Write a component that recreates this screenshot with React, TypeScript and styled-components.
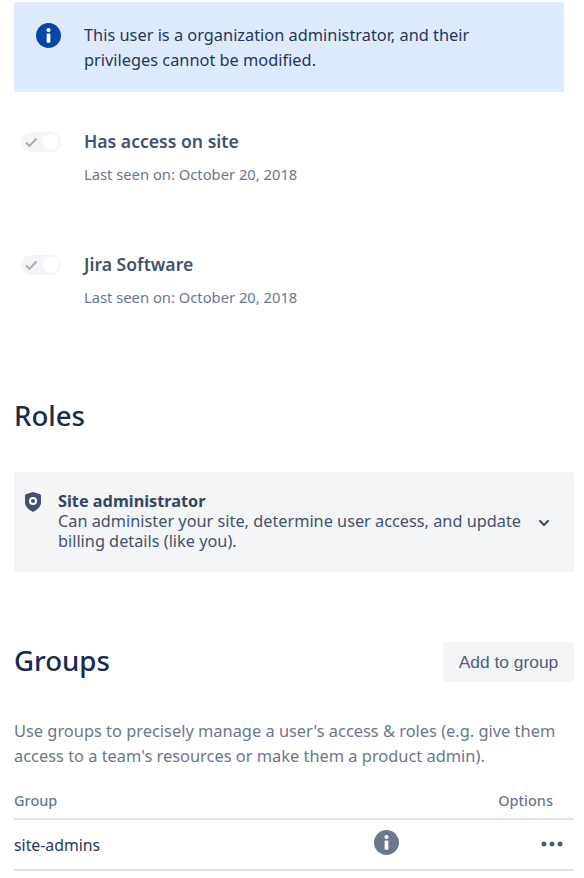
import React from 'react';
import styled, { createGlobalStyle } from 'styled-components';

const GlobalStyle = createGlobalStyle`
  html, body {
    margin: 0;
    padding: 0;
    background: #fff;
  }
  body {
    font-family: "Noto Sans", "Open Sans", sans-serif;
    color: #172b4d;
  }
`;

const Page = styled.div`
  width: 560px;
  height: 878px;
  overflow: hidden;
  padding: 2px 10px 0 14px;
`;

const Alert = styled.div`
  display: flex;
  align-items: flex-start;
  gap: 23px;
  height: 90px;
  box-sizing: border-box;
  width: 550px;
  padding: 21px 20px 0 22px;
  background: #deebff;
  border-radius: 3px;
`;

const AlertText = styled.div`
  font-size: 16.35px;
  line-height: 25px;
  color: #253858;
`;

const AccessList = styled.div`
  display: flex;
  flex-direction: column;
  gap: 68px;
  margin-top: 37px;
`;

const AccessRow = styled.div`
  display: flex;
  gap: 23px;
  padding-left: 7px;
`;

const Toggle = styled.div`
  width: 40px;
  height: 20px;
  margin-top: 3px;
  display: flex;
  align-items: center;
  justify-content: space-between;
  box-sizing: border-box;
  padding: 0 2px 0 3px;
  border-radius: 10px;
  background: #f4f5f7;
  color: #a5adba;
`;

const Knob = styled.span`
  width: 16px;
  height: 16px;
  border-radius: 50%;
  background: #fff;
`;

const AccessName = styled.div`
  font-size: 17.6px;
  line-height: 25px;
  font-weight: 600;
  color: #42526e;
`;

const Seen = styled.div`
  margin-top: 10px;
  font-size: 14.75px;
  line-height: 20px;
  color: #6b778c;
`;

const SectionTitle = styled.h2`
  margin: 0;
  font-size: 27.6px;
  line-height: 36px;
  font-weight: 500;
  color: #172b4d;
`;

const RolesTitle = styled(SectionTitle)`
  margin-top: 90px;
`;

const GroupsTitle = styled(SectionTitle)`
  margin-bottom: 4px;
`;

const RoleCard = styled.div`
  display: flex;
  align-items: flex-start;
  width: 560px;
  height: 100px;
  box-sizing: border-box;
  margin-top: 39px;
  padding: 19px 0 0 10px;
  background: #f4f5f7;
  border-radius: 3px;
`;

const RoleBody = styled.div`
  flex: 1;
  margin-left: 16px;
  font-size: 16.3px;
  line-height: 20px;
  color: #42526e;
`;

const RoleName = styled.div`
  font-weight: 700;
  color: #344563;
`;

const Chevron = styled.div`
  width: 18px;
  margin: 23px 21px 0 0;
  color: #42526e;
`;

const GroupsHeader = styled.div`
  display: flex;
  align-items: center;
  justify-content: space-between;
  margin-top: 70px;
`;

const AddButton = styled.button`
  width: 131px;
  height: 40px;
  border: 0;
  border-radius: 3px;
  background: #f4f5f7;
  color: #505f79;
  font-family: "Liberation Sans", Arial, sans-serif;
  font-size: 17.4px;
`;

const Description = styled.p`
  margin: 36px 0 0;
  font-size: 16.4px;
  line-height: 25px;
  color: #6b778c;
`;

const GroupTable = styled.div`
  margin-top: 14px;
  width: 560px;
`;

const TableRow = styled.div`
  display: grid;
  grid-template-columns: 360px 1fr 40px;
  align-items: center;
`;

const HeadRow = styled(TableRow)`
  height: 36px;
  border-bottom: 2px solid #dfe1e6;
  font-size: 14.5px;
  font-weight: 500;
  color: #6b778c;
`;

const BodyRow = styled(TableRow)`
  height: 49px;
  border-bottom: 2px solid #dfe1e6;
  font-size: 15.8px;
  color: #253858;
`;

const OptionsHead = styled.span`
  grid-column: 3;
  justify-self: end;
  margin-right: 21px;
  white-space: nowrap;
`;

const InfoCell = styled.span`
  display: flex;
  margin-top: -4px;
`;

const Dots = styled.span`
  display: flex;
  justify-content: flex-end;
  padding-right: 10px;
  margin-top: -2px;
  color: #505f79;
`;

const InfoIcon = ({ size, color }: { size: number; color: string }) => (
  <svg width={size} height={size} viewBox="0 0 24 24" style={{ flexShrink: 0 }}>
    <circle cx="12" cy="12" r="12" fill={color} />
    <circle cx="12" cy="6.8" r="2" fill="#fff" />
    <rect x="10.2" y="10" width="3.6" height="9" rx="1" fill="#fff" />
  </svg>
);

const CheckIcon = () => (
  <svg width="16" height="14" viewBox="0 0 16 14" fill="none">
    <path d="M2 7.500l3.500 3.500 7-7.500" stroke="currentColor" strokeWidth="1.9" />
  </svg>
);

const ShieldIcon = () => (
  <svg width="18" height="22" viewBox="0 0 18 22">
    <path
      d="M9 1l6.500 2c.9.3 1.500 1 1.500 2v6.500c0 4-3.600 7.200-8 9.500-4.400-2.300-8-5.500-8-9.500V5c0-1 .6-1.700 1.500-2z"
      fill="#42526e"
    />
    <circle cx="9" cy="10" r="3" fill="none" stroke="#fff" strokeWidth="2" />
  </svg>
);

const ChevronIcon = () => (
  <svg width="18" height="18" viewBox="0 0 18 18" fill="none">
    <path d="M5 7l4 4 4-4" stroke="currentColor" strokeWidth="2.2" strokeLinecap="round" strokeLinejoin="round" />
  </svg>
);

const DotsIcon = () => (
  <svg width="24" height="8" viewBox="0 0 24 8" fill="currentColor">
    <circle cx="4" cy="4" r="2.500" />
    <circle cx="12" cy="4" r="2.500" />
    <circle cx="20" cy="4" r="2.500" />
  </svg>
);

const access = [
  { name: 'Has access on site', seen: 'Last seen on: October 20, 2018' },
  { name: 'Jira Software', seen: 'Last seen on: October 20, 2018' },
];

const App = () => (
  <>
    <GlobalStyle />
    <Page>
      <Alert>
        <InfoIcon size={25} color="#0747a6" />
        <AlertText>
          This user is a organization administrator, and their
          <br />
          privileges cannot be modified.
        </AlertText>
      </Alert>

      <AccessList>
        {access.map((item) => (
          <AccessRow key={item.name}>
            <Toggle>
              <CheckIcon />
              <Knob />
            </Toggle>
            <div>
              <AccessName>{item.name}</AccessName>
              <Seen>{item.seen}</Seen>
            </div>
          </AccessRow>
        ))}
      </AccessList>

      <RolesTitle>Roles</RolesTitle>
      <RoleCard>
        <ShieldIcon />
        <RoleBody>
          <RoleName>Site administrator</RoleName>
          Can administer your site, determine user access, and update
          <br />
          billing details (like you).
        </RoleBody>
        <Chevron>
          <ChevronIcon />
        </Chevron>
      </RoleCard>

      <GroupsHeader>
        <GroupsTitle>Groups</GroupsTitle>
        <AddButton>Add to group</AddButton>
      </GroupsHeader>

      <Description>
        Use groups to precisely manage a user's access &amp; roles (e.g. give them
        <br />
        access to a team's resources or make them a product admin).
      </Description>

      <GroupTable>
        <HeadRow>
          <span>Group</span>
          <OptionsHead>Options</OptionsHead>
        </HeadRow>
        <BodyRow>
          <span>site-admins</span>
          <InfoCell>
            <InfoIcon size={25} color="#6b778c" />
          </InfoCell>
          <Dots>
            <DotsIcon />
          </Dots>
        </BodyRow>
      </GroupTable>
    </Page>
  </>
);

export default App;
